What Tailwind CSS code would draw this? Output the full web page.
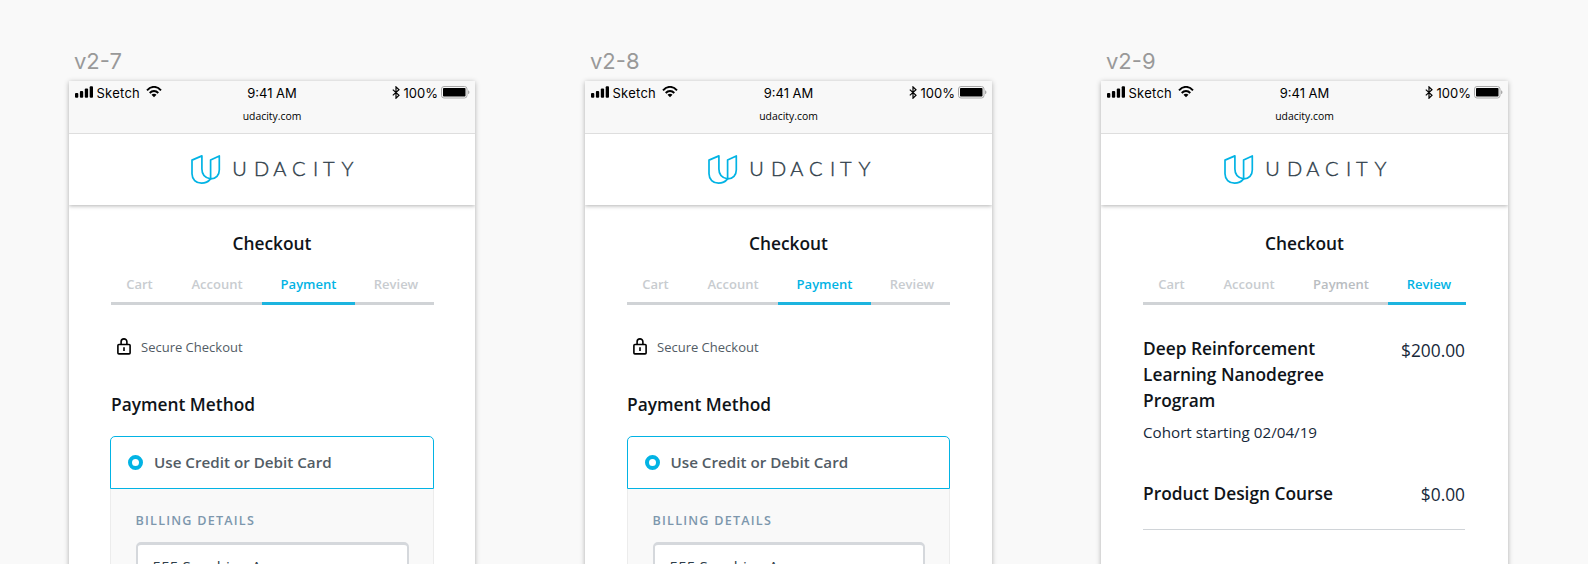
<!DOCTYPE html>
<html lang="en">
<head>
<meta charset="utf-8">
<title>Checkout artboards</title>
<script src="https://cdn.jsdelivr.net/npm/@tailwindcss/browser@4"></script>
</head>
<body class="h-[564px] overflow-hidden bg-[#f9f9f9] font-['Open_Sans',sans-serif]">
<svg class="hidden">
  <symbol id="signal" viewBox="0 0 18 12">
    <rect x="0" y="7" width="3.300" height="4.800" rx="1"/><rect x="4.900" y="5" width="3.300" height="6.800" rx="1"/><rect x="9.800" y="2.600" width="3.300" height="9.200" rx="1"/><rect x="14.700" y="0.200" width="3.300" height="11.600" rx="1"/>
  </symbol>
  <symbol id="wifi" viewBox="0 0 16 12">
    <g fill="none" stroke="currentColor" stroke-width="1.900"><path d="M1 4.300C5-.3 11-.3 15 4.300"/><path d="M3.700 7C6.200 4.300 9.800 4.300 12.300 7"/></g><path d="M5.500 8.800C7 7.400 9 7.400 10.500 8.800L8 11.300Z"/>
  </symbol>
  <symbol id="bluetooth" viewBox="0 0 8 13">
    <path d="M.8 3.600 7 9.300 4 12.200V.9L7 3.800.8 9.400" fill="none" stroke="currentColor" stroke-width="1.200"/>
  </symbol>
  <symbol id="battery" viewBox="0 0 29 13">
    <rect x=".5" y=".5" width="25.500" height="11.500" rx="2.500" fill="none" stroke="#a9a9a9"/><rect x="2" y="2" width="22.500" height="8.500" rx=".8"/><path d="M27 4.300C29 5 29 7.600 27 8.300Z" fill="#a9a9a9"/>
  </symbol>
  <symbol id="logo" viewBox="0 0 164 31">
    <g fill="none" stroke="#02b3e4" stroke-width="1.700" stroke-linejoin="round"><path d="M1 6.100 10.900 1.900V15C10.900 20.500 14 24 19.600 24.900C17.200 27.900 14 29.200 10.500 29.200C5 29.200 1 25.200 1 19.800Z"/><path d="M19.600 24.900V6.100L28.300 1.900V16C28.300 21 25 24.900 19.600 24.900Z"/></g>
    <text x="41.200 63 82.200 100.900 122 131.900 150.600" y="22" font-family="Lato" font-weight="300" font-size="20" fill="#2e3d49" stroke="#2e3d49" stroke-width=".4">UDACITY</text>
  </symbol>
  <symbol id="lock" viewBox="0 0 14 17">
    <g fill="none" stroke="#000" stroke-width="1.600"><rect x=".9" y="6.500" width="12.200" height="9.400" rx="1"/><path d="M4.100 6.500V3.700C4.100-.1 9.900-.1 9.900 3.700V6.500M7 9.300V13"/></g>
  </symbol>
</svg>

<main class="grid h-[564px] grid-cols-[516px_516px_516px] overflow-hidden pt-[48px] pl-[69px]">

  <section class="w-[406px]">
    <h2 class="h-[33px] pl-[5px] font-[Inter] text-[22px] leading-[26px] text-[#999]">v2-7</h2>
    <div class="h-[520px] bg-white shadow-[0_1px_5px_rgba(0,0,0,.3)]">
      <div class="h-[53px] border-b border-[#dedede] bg-[#f8f8f8]">
        <div class="grid h-[25px] grid-cols-3 items-center font-[Inter] text-[13px] leading-[25px] text-black">
          <div class="flex items-center pl-[5.500px]"><svg class="mb-[3px] h-3 w-[18px]"><use href="#signal"/></svg><span class="ml-1 tracking-[.25px]">Sketch</span><svg class="mb-[3px] ml-[6px] h-3 w-4"><use href="#wifi"/></svg></div>
          <div class="text-center">9:41 AM</div>
          <div class="flex items-center justify-end pr-[5px]"><svg class="mb-[2px] h-[13px] w-2"><use href="#bluetooth"/></svg><span class="ml-1">100%</span><svg class="mb-[2px] ml-[3px] h-[13px] w-[29px]"><use href="#battery"/></svg></div>
        </div>
        <p class="text-center text-[10.400px] leading-[20px] text-black">udacity.com</p>
      </div>
      <div class="flex h-[71px] justify-center pt-[20px] pl-[2px] shadow-[0_1px_4px_rgba(0,0,0,.3)] [clip-path:inset(0_0_-6px_0)]"><svg class="h-[31px] w-[164px]"><use href="#logo"/></svg></div>
      <div class="px-[42px]">
        <h1 class="pt-[25px] text-center text-[17.340px] leading-[26px] font-semibold text-[#0f1419]">Checkout</h1>
        <nav class="mt-[9px] flex h-[40px] text-center text-[13px] leading-[38px] font-semibold text-[#c8ccd0]">
          <span class="h-[40px] w-[57px] shrink-0 border-b-3 border-[#d0d3d6]">Cart</span><span class="h-[40px] w-[94px] shrink-0 border-b-3 border-[#d0d3d6] pl-1">Account</span><span class="h-[40px] w-[93px] shrink-0 border-b-3 border-[#1cb4df] text-[#02b3e4]">Payment</span><span class="h-[40px] w-[79px] shrink-0 border-b-3 border-[#d0d3d6] pl-[3px]">Review</span>
        </nav>
        <div class="flex h-[80px] items-center pt-[5px] pl-[6px]"><svg class="mb-[2px] h-[17px] w-[14px]"><use href="#lock"/></svg><span class="ml-[10px] text-[13px] text-[#525c65]">Secure Checkout</span></div>
        <h3 class="pt-[6px] text-[17.340px] leading-[26px] font-semibold text-[#0f1419]">Payment Method</h3>
        <div class="-mx-[1px] mt-[19px] flex h-[53px] items-center rounded-t-[5px] border border-[#02b3e4] pl-[17px]"><span class="size-[15px] rounded-full border-4 border-[#02b3e4]"></span><span class="ml-[11px] text-[15.200px] font-semibold text-[#525c65]">Use Credit or Debit Card</span></div>
        <div class="-mx-[1px] h-[100px] border-x border-[#ececec] bg-[#f9f9f9] px-[24.500px]">
          <h4 class="pt-[22px] text-[12.600px] leading-[20px] font-semibold tracking-[1.220px] text-[#7d97ad]">BILLING DETAILS</h4>
          <div class="mt-[11px] h-[60px] rounded-[5px] border-2 border-t-3 border-[#d5d8dc] bg-white pt-[10px] pl-[15px] text-[15.200px] leading-[22px] text-[#2e3d49]">555 Sunshine Ave</div>
        </div>
      </div>
    </div>
  </section>

  <section class="w-[407px]">
    <h2 class="h-[33px] pl-[5px] font-[Inter] text-[22px] leading-[26px] text-[#999]">v2-8</h2>
    <div class="h-[520px] bg-white shadow-[0_1px_5px_rgba(0,0,0,.3)]">
      <div class="h-[53px] border-b border-[#dedede] bg-[#f8f8f8]">
        <div class="grid h-[25px] grid-cols-3 items-center font-[Inter] text-[13px] leading-[25px] text-black">
          <div class="flex items-center pl-[5.500px]"><svg class="mb-[3px] h-3 w-[18px]"><use href="#signal"/></svg><span class="ml-1 tracking-[.25px]">Sketch</span><svg class="mb-[3px] ml-[6px] h-3 w-4"><use href="#wifi"/></svg></div>
          <div class="text-center">9:41 AM</div>
          <div class="flex items-center justify-end pr-[5px]"><svg class="mb-[2px] h-[13px] w-2"><use href="#bluetooth"/></svg><span class="ml-1">100%</span><svg class="mb-[2px] ml-[3px] h-[13px] w-[29px]"><use href="#battery"/></svg></div>
        </div>
        <p class="text-center text-[10.400px] leading-[20px] text-black">udacity.com</p>
      </div>
      <div class="flex h-[71px] justify-center pt-[20px] pl-[2px] shadow-[0_1px_4px_rgba(0,0,0,.3)] [clip-path:inset(0_0_-6px_0)]"><svg class="h-[31px] w-[164px]"><use href="#logo"/></svg></div>
      <div class="px-[42px]">
        <h1 class="pt-[25px] text-center text-[17.340px] leading-[26px] font-semibold text-[#0f1419]">Checkout</h1>
        <nav class="mt-[9px] flex h-[40px] text-center text-[13px] leading-[38px] font-semibold text-[#c8ccd0]">
          <span class="h-[40px] w-[57px] shrink-0 border-b-3 border-[#d0d3d6]">Cart</span><span class="h-[40px] w-[94px] shrink-0 border-b-3 border-[#d0d3d6] pl-1">Account</span><span class="h-[40px] w-[93px] shrink-0 border-b-3 border-[#1cb4df] text-[#02b3e4]">Payment</span><span class="h-[40px] w-[79px] shrink-0 border-b-3 border-[#d0d3d6] pl-[3px]">Review</span>
        </nav>
        <div class="flex h-[80px] items-center pt-[5px] pl-[6px]"><svg class="mb-[2px] h-[17px] w-[14px]"><use href="#lock"/></svg><span class="ml-[10px] text-[13px] text-[#525c65]">Secure Checkout</span></div>
        <h3 class="pt-[6px] text-[17.340px] leading-[26px] font-semibold text-[#0f1419]">Payment Method</h3>
        <div class="mt-[19px] flex h-[53px] items-center rounded-t-[5px] border border-[#02b3e4] pl-[16.500px]"><span class="size-[15px] rounded-full border-4 border-[#02b3e4]"></span><span class="ml-[11px] text-[15.200px] font-semibold text-[#525c65]">Use Credit or Debit Card</span></div>
        <div class="h-[100px] border-x border-[#ececec] bg-[#f9f9f9] px-[24.500px]">
          <h4 class="pt-[22px] text-[12.600px] leading-[20px] font-semibold tracking-[1.220px] text-[#7d97ad]">BILLING DETAILS</h4>
          <div class="mt-[11px] h-[60px] rounded-[5px] border-2 border-t-3 border-[#d5d8dc] bg-white pt-[10px] pl-[15px] text-[15.200px] leading-[22px] text-[#2e3d49]">555 Sunshine Ave</div>
        </div>
      </div>
    </div>
  </section>

  <section class="w-[407px]">
    <h2 class="h-[33px] pl-[5px] font-[Inter] text-[22px] leading-[26px] text-[#999]">v2-9</h2>
    <div class="h-[520px] bg-white shadow-[0_1px_5px_rgba(0,0,0,.3)]">
      <div class="h-[53px] border-b border-[#dedede] bg-[#f8f8f8]">
        <div class="grid h-[25px] grid-cols-3 items-center font-[Inter] text-[13px] leading-[25px] text-black">
          <div class="flex items-center pl-[5.500px]"><svg class="mb-[3px] h-3 w-[18px]"><use href="#signal"/></svg><span class="ml-1 tracking-[.25px]">Sketch</span><svg class="mb-[3px] ml-[6px] h-3 w-4"><use href="#wifi"/></svg></div>
          <div class="text-center">9:41 AM</div>
          <div class="flex items-center justify-end pr-[5px]"><svg class="mb-[2px] h-[13px] w-2"><use href="#bluetooth"/></svg><span class="ml-1">100%</span><svg class="mb-[2px] ml-[3px] h-[13px] w-[29px]"><use href="#battery"/></svg></div>
        </div>
        <p class="text-center text-[10.400px] leading-[20px] text-black">udacity.com</p>
      </div>
      <div class="flex h-[71px] justify-center pt-[20px] pl-[2px] shadow-[0_1px_4px_rgba(0,0,0,.3)] [clip-path:inset(0_0_-6px_0)]"><svg class="h-[31px] w-[164px]"><use href="#logo"/></svg></div>
      <div class="px-[42px]">
        <h1 class="pt-[25px] text-center text-[17.340px] leading-[26px] font-semibold text-[#0f1419]">Checkout</h1>
        <nav class="mt-[9px] flex h-[40px] text-center text-[13px] leading-[38px] font-semibold text-[#c8ccd0]">
          <span class="h-[40px] w-[57px] shrink-0 border-b-3 border-[#d0d3d6]">Cart</span><span class="h-[40px] w-[94px] shrink-0 border-b-3 border-[#d0d3d6] pl-1">Account</span><span class="h-[40px] w-[94px] shrink-0 border-b-3 border-[#d0d3d6] text-[#b9bdc1]">Payment</span><span class="h-[40px] w-[78px] shrink-0 border-b-3 border-[#1cb4df] pl-1 text-[#02b3e4]">Review</span>
        </nav>
        <div class="flex items-start justify-between pt-[30px]">
          <h3 class="w-[200px] text-[17.340px] leading-[26px] font-semibold text-[#0f1419]">Deep Reinforcement Learning Nanodegree Program</h3>
          <span class="pt-[2px] pr-[1px] text-[17.340px] leading-[26px] text-[#17293a]">$200.00</span>
        </div>
        <p class="pt-[7px] text-[15.200px] leading-[24px] text-[#17293a]">Cohort starting 02/04/19</p>
        <div class="mr-[1px] flex h-[86px] justify-between border-b-[1.500px] border-[#d0d4d8] pt-[36px] text-[17.340px] leading-[26px]">
          <h3 class="font-semibold text-[#0f1419]">Product Design Course</h3><span class="pt-[1px] text-[#17293a]">$0.00</span>
        </div>
      </div>
    </div>
  </section>
</main>
</body>
</html>
